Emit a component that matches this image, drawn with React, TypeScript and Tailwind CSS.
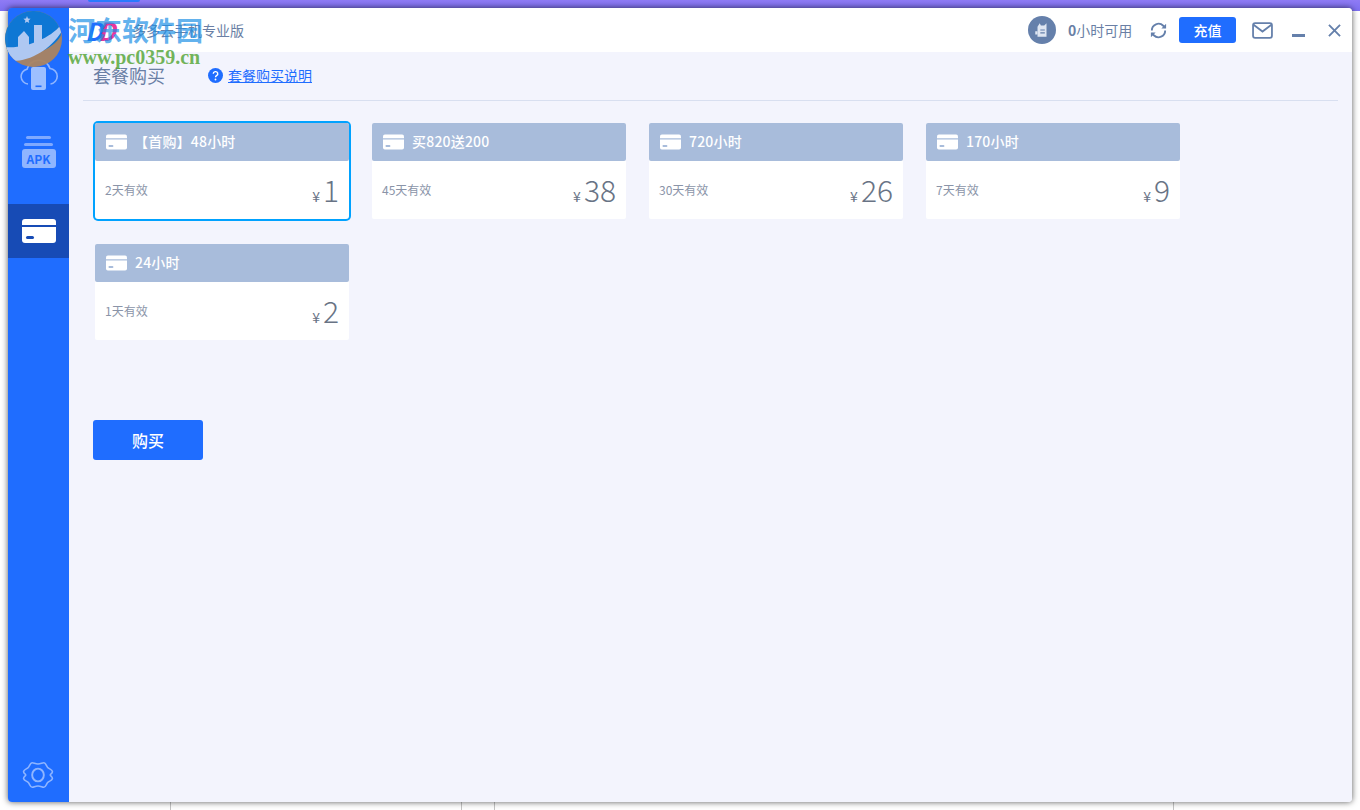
const FONT = "font-['Noto_Sans_CJK_SC','Noto_Sans',sans-serif]";

const plans = [
  { name: "【首购】48小时", days: "2天有效", price: "1", selected: true },
  { name: "买820送200", days: "45天有效", price: "38" },
  { name: "720小时", days: "30天有效", price: "26" },
  { name: "170小时", days: "7天有效", price: "9" },
  { name: "24小时", days: "1天有效", price: "2" },
];

const CardIcon = ({ mark = "#a8bcdb", className = "" }: { mark?: string; className?: string }) => (
  <svg viewBox="0 0 34 24" className={className}>
    <path d="M3 0h28a3 3 0 0 1 3 3v3H0V3a3 3 0 0 1 3-3z" fill="#fff" />
    <path d="M0 8h34v13a3 3 0 0 1-3 3H3a3 3 0 0 1-3-3z" fill="#fff" />
    <rect x="4" y="17" width="8" height="3" rx="1.500" fill={mark} />
  </svg>
);

const PlanCard = ({ plan }: { plan: (typeof plans)[number] }) => (
  <div
    className={`w-[254px] h-[96px] rounded-[2px] bg-white ${
      plan.selected ? "ring-2 ring-[#00a2ff] rounded-[3px]" : ""
    }`}
  >
    <div className="h-[38px] bg-[#a8bcdb] rounded-[2px] flex items-center pl-[11px] pb-[1px] text-white text-[14px] font-medium tracking-[0.2px]">
      <CardIcon className="w-[21px] h-[16px] mr-[8px] shrink-0" mark="#a8bcdb" />
      <span className={plan.selected ? "ml-[-1px]" : ""}>{plan.name}</span>
    </div>
    <div className="h-[58px] flex items-center justify-between pl-[10px] pr-[10px]">
      <span className="text-[12px] text-[#8a94a8]">{plan.days}</span>
      <span className="flex items-baseline text-[#687385]">
        <span className="text-[14px] mr-[3px]">¥</span>
        <span className="text-[30px] leading-none font-light">{plan.price}</span>
      </span>
    </div>
  </div>
);

export default function App() {
  return (
    <div className={`${FONT} relative w-[1360px] h-[810px] overflow-hidden bg-white`}>
      {/* the desktop behind the window */}
      <div className="absolute top-0 left-0 right-0 h-[11px] bg-gradient-to-b from-[#8f7bf5] to-[#7d6ff0]" />
      <div className="absolute top-0 left-[88px] w-[52px] h-[2px] rounded-b-[3px] bg-[#2b7bff]" />
      <div className="absolute bottom-0 left-[170px] w-px h-[8px] bg-[#c4c4c4]" />
      <div className="absolute bottom-0 left-[461px] w-px h-[8px] bg-[#c4c4c4]" />
      <div className="absolute bottom-0 left-[494px] w-px h-[8px] bg-[#c4c4c4]" />
      <div className="absolute bottom-0 left-[1173px] w-px h-[8px] bg-[#c4c4c4]" />

      {/* window */}
      <div className="absolute left-[8px] top-[8px] w-[1344px] h-[794px] rounded-[4px] overflow-hidden flex shadow-[0_0_6px_rgba(0,0,0,0.65)]">
        <aside className="w-[61px] shrink-0 bg-[#1f6dff] flex flex-col items-center">
          <div className="h-[44px] shrink-0" />
          <div className="h-[50px] shrink-0 flex items-start justify-center pt-[7px]">
            <svg viewBox="0 0 38 32" className="w-[38px] h-[32px]" fill="none">
              <path
                d="M8 25a7.500 7.500 0 0 1-1-14.800A12 12 0 0 1 30 9.500a7.800 7.800 0 0 1 .5 15.500"
                stroke="#8fb5ff"
                strokeWidth="1.600"
              />
              <rect x="11" y="8" width="15" height="23" rx="2" fill="#9dbfff" />
              <rect x="15.500" y="26.500" width="6" height="1.600" fill="#1f6dff" />
            </svg>
          </div>
          <div className="h-[102px] shrink-0 flex flex-col items-center justify-start pt-[34px]">
            <div className="w-[25px] h-[3px] rounded-full bg-[#7fa9ff] mb-[4px]" />
            <div className="w-[29px] h-[3px] rounded-full bg-[#7fa9ff] mb-[3px]" />
            <div className="w-[34px] h-[19px] rounded-[3px] bg-[#8fb5ff] flex items-center justify-center text-[#1f6dff] text-[12px] font-bold leading-none">
              APK
            </div>
          </div>
          <div className="w-full h-[54px] shrink-0 bg-[#174bb5] flex items-center justify-center">
            <CardIcon className="w-[34px] h-[24px]" mark="#174bb5" />
          </div>
          <div className="mt-auto mb-[11px] mr-[1px]">
            <svg viewBox="0 0 32 30" className="w-[34px] h-[32px]" fill="none" stroke="#8fb5ff" strokeWidth="1.500">
              <path d="M10.500 3.500c1.800 0 2.800 1.200 5.500 1.200s3.700-1.200 5.500-1.200 2.300 3 3.600 4.400 3.900 1.700 4.400 3.600-2 2.600-2 3.500 2.500 1.600 2 3.500-3.100 2.200-4.400 3.600-1.800 4.400-3.600 4.400-2.800-1.200-5.500-1.200-3.700 1.200-5.500 1.200-2.300-3-3.600-4.400-3.900-1.700-4.400-3.600 2-2.600 2-3.500-2.500-1.600-2-3.500 3.100-2.200 4.400-3.600 1.800-4.400 3.600-4.400z" />
              <ellipse cx="16" cy="15" rx="5.500" ry="6" strokeWidth="1.800" />
            </svg>
          </div>
        </aside>

        <div className="flex-1 flex flex-col bg-[#f3f4fd] min-w-0">
          <header className="h-[44px] shrink-0 bg-white flex items-center pl-[16px] pr-[11px]">
            <span className="text-[#1f6dff] font-bold italic text-[25px] leading-none tracking-[-5px] w-[35px]">
              D<span className="text-[#e8359c]">D</span>
            </span>
            <span className="ml-[12px] text-[14px] text-[#6a7fa5]">多多云手机专业版</span>
            <div className="ml-auto flex items-center">
              <div className="w-[28px] h-[28px] rounded-full bg-[#6580ab] flex items-center justify-center">
                <svg viewBox="0 0 16 16" className="w-[18px] h-[18px]">
                  <path d="M4 5l2-3 1 2h3l2-2v12H4z" fill="#dfe6f2" />
                  <path d="M6.500 8h4M6.500 10.500h4" stroke="#6580ab" strokeWidth="1" />
                  <path d="M2 9h2v3H2z" fill="#dfe6f2" />
                </svg>
              </div>
              <span className="ml-[12px] text-[14px] text-[#6a7fa5] w-[65px] whitespace-nowrap">
                <b className="font-bold">0</b>小时可用
              </span>
              <svg viewBox="0 0 20 20" className="ml-[16px] w-[19px] h-[19px]" fill="none" stroke="#6580ab" strokeWidth="2">
                <path d="M3 10a7 7 0 0 1 12-5l2 2" />
                <path d="M17 10a7 7 0 0 1-12 5l-2-2" />
                <path d="M18 3v5h-5M2 17v-5h5" fill="#6580ab" stroke="none" />
              </svg>
              <button className="ml-[11px] w-[57px] h-[26px] rounded-[3px] bg-[#1f6dff] text-white text-[14px] font-medium flex items-center justify-center">
                充值
              </button>
              <svg viewBox="0 0 20 16" className="ml-[16px] w-[21px] h-[17px]" fill="none" stroke="#6580ab" strokeWidth="1.700">
                <rect x="1" y="1" width="18" height="14" rx="2" />
                <path d="M1.500 2.500L10 9l8.500-6.500" />
              </svg>
              <div className="ml-[19px] w-[13px] h-[3px] mt-[11px] bg-[#6580ab]" />
              <svg viewBox="0 0 14 14" className="ml-[23px] w-[13px] h-[13px]" fill="none" stroke="#6580ab" strokeWidth="2">
                <path d="M1 1l12 12M13 1L1 13" />
              </svg>
            </div>
          </header>

          <main className="flex-1 flex flex-col pt-0 pr-[14px] pl-[14px]">
            <div className="h-[49px] shrink-0 border-b border-[#d8dff0] flex items-center pl-[10px] pb-[1px]">
              <h1 className="text-[18px] text-[#6a7fa5] font-normal w-[115px]">套餐购买</h1>
              <svg viewBox="0 0 16 16" className="w-[15px] h-[15px]">
                <circle cx="8" cy="8" r="8" fill="#1f6dff" />
                <path d="M5.600 6.200a2.400 2.300 0 1 1 3.500 2c-.8.500-1.100.900-1.100 1.700" fill="none" stroke="#fff" strokeWidth="1.500" />
                <circle cx="8" cy="12.200" r="1" fill="#fff" />
              </svg>
              <a className="ml-[5px] text-[14px] text-[#1f6dff] underline">套餐购买说明</a>
            </div>

            <div className="flex flex-wrap gap-x-[23px] gap-y-[25px] pl-[12px] pt-[22px] w-[1200px] h-[319px] content-start">
              {plans.map((plan) => (
                <PlanCard key={plan.name} plan={plan} />
              ))}
            </div>

            <button className="ml-[10px] w-[110px] h-[40px] rounded-[3px] bg-[#1f6dff] text-white text-[16px] font-medium">
              购买
            </button>
          </main>
        </div>
      </div>

      {/* site watermark over the top-left corner */}
      <div className="absolute left-[5px] top-[11px] w-[57px] h-[56px] rounded-full overflow-hidden bg-[#ab8460] opacity-95">
        <svg viewBox="0 0 57 56" className="w-full h-full">
          <path d="M0 28a28 28 0 0 1 56-4C50 38 24 48 4 44A28 28 0 0 1 0 28z" fill="#0e78d2" />
          <path d="M0 36C20 38 44 28 56 14l1 6C46 38 26 50 8 50z" fill="#b7cdf2" />
          <path d="M13 42V26l6-6 5 6v10zM29 36V14h8v18z" fill="#b7cdf2" />
          <path d="M22 5l1 2.500 2.600.3-2 1.700.6 2.600-2.200-1.300-2.200 1.300.6-2.600-2-1.700 2.600-.3z" fill="#b7cdf2" />
        </svg>
      </div>
      <div className="absolute left-[68px] top-[12px] text-[27px] leading-[36px] font-bold text-[#1d8fe6]/70 whitespace-nowrap">
        河东软件园
      </div>
      <div className="absolute left-[68px] top-[47px] text-[20px] leading-[20px] font-bold text-[#5aa83c]/85 font-['Liberation_Serif',serif] whitespace-nowrap">
        www.pc0359.cn
      </div>
    </div>
  );
}
